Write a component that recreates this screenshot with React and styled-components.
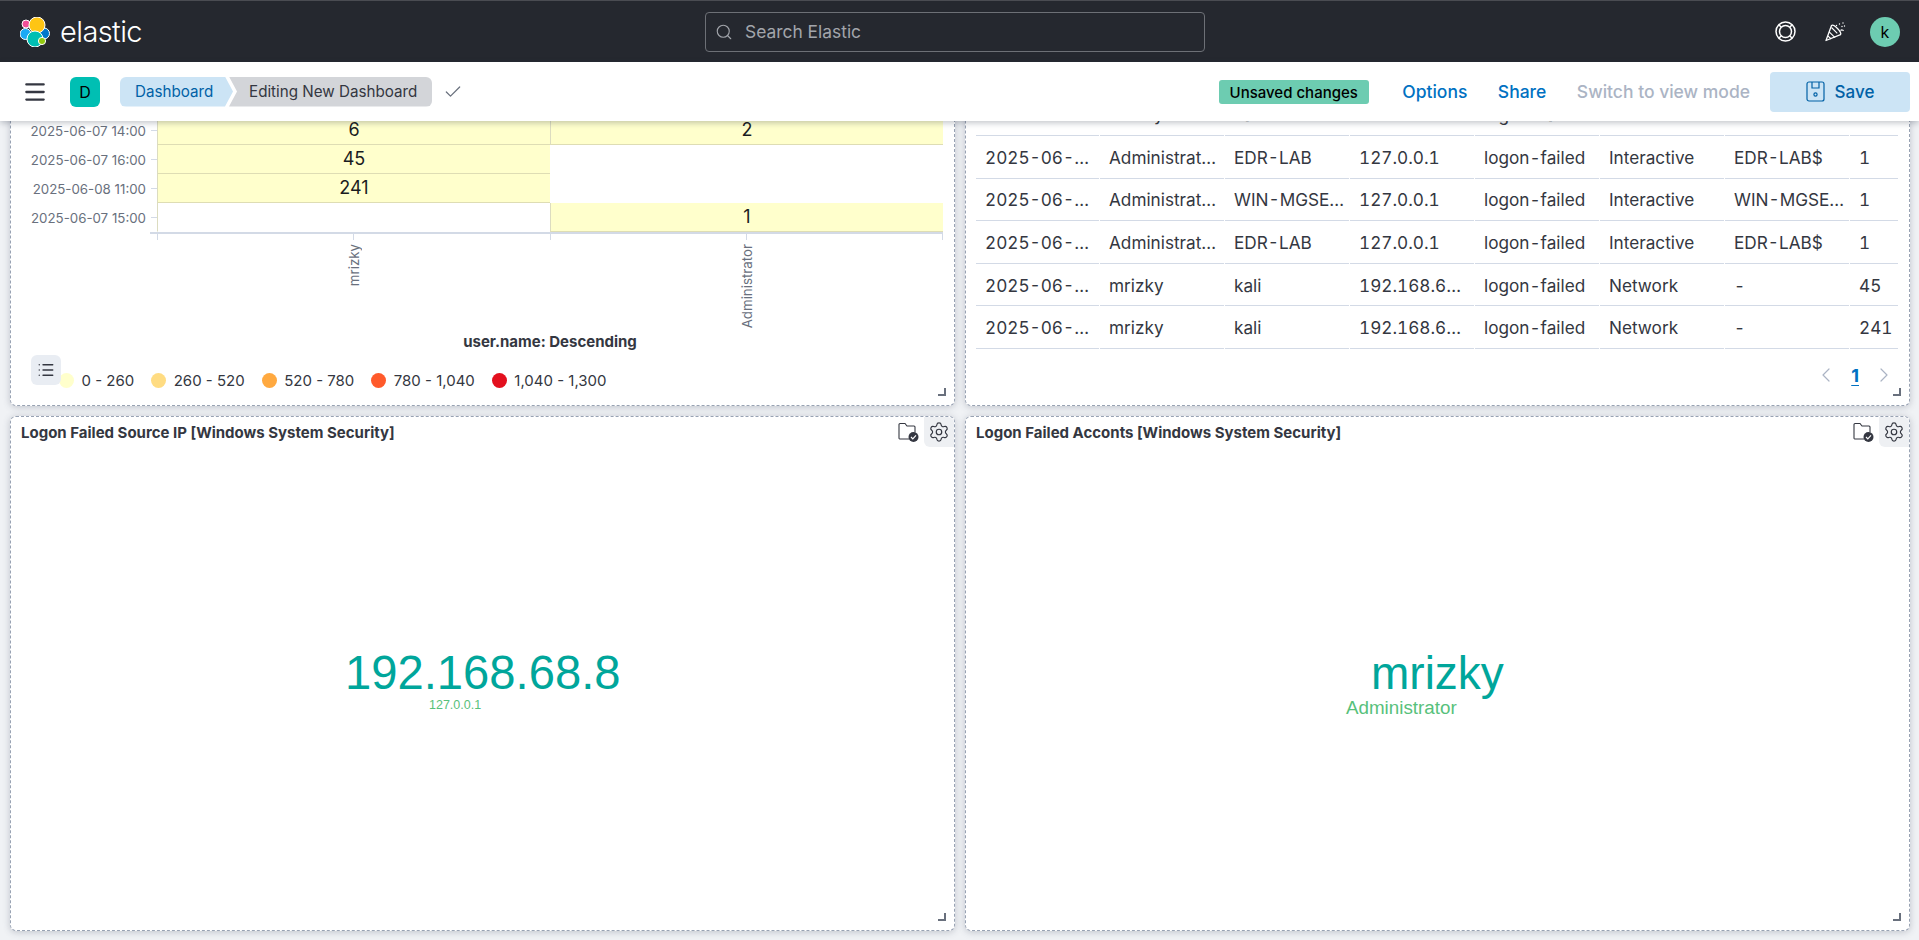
import React from 'react';
import styled, { createGlobalStyle } from 'styled-components';
import { Search, Menu, Check, Settings, List, ChevronLeft, ChevronRight } from 'lucide-react';

const GlobalStyle = createGlobalStyle`
  html, body { margin: 0; height: 100%; overflow: hidden; background: #f0f2f5; }
  body { font-family: Inter, "Liberation Sans", sans-serif; color: #343741; }
`;

const Page = styled.div`
  display: flex;
  flex-direction: column;
  height: 100vh;
`;

const TopBar = styled.header`
  display: grid;
  grid-template-columns: 705px 500px 1fr;
  align-items: center;
  height: 62px;
  box-sizing: border-box;
  flex-shrink: 0;
  background: #25282f;
  border-top: 1px solid #4a4c52;
`;

const Brand = styled.div`
  display: flex;
  align-items: center;
  gap: 10px;
  padding-left: 20px;
  color: #fff;
  font-size: 29px;
  font-weight: 300;
  letter-spacing: -0.6px;
`;

const SearchBox = styled.div`
  display: flex;
  align-items: center;
  gap: 12px;
  height: 40px;
  box-sizing: border-box;
  padding-left: 9px;
  border: 1px solid #6d7076;
  border-radius: 4px;
  color: #a2a5ab;
  font-size: 17.4px;
`;

const TopIcons = styled.div`
  display: flex;
  justify-content: flex-end;
  align-items: center;
  gap: 20px;
  padding-right: 19px;
  color: #fff;
`;

const IconSlot = styled.div`
  display: flex;
  justify-content: center;
  width: 30px;
`;

const Avatar = styled.div`
  display: flex;
  align-items: center;
  justify-content: center;
  width: 30px;
  height: 30px;
  border-radius: 50%;
  background: #6dccb1;
  color: #000;
  font-size: 16px;
`;

const SubBar = styled.div`
  position: relative;
  z-index: 2;
  display: flex;
  align-items: center;
  height: 59px;
  flex-shrink: 0;
  padding: 0 9px 0 22px;
  background: #fff;
  box-shadow: 0 2px 6px rgba(40, 50, 70, 0.28);
`;

const Burger = styled.div`
  display: flex;
  color: #343741;
  margin-right: 22px;
`;

const SpaceBadge = styled.div`
  display: flex;
  align-items: center;
  justify-content: center;
  width: 30px;
  height: 30px;
  margin-right: 20px;
  border-radius: 6px;
  background: #00bfb3;
  color: #000;
  font-size: 16px;
`;

const Crumbs = styled.div`
  display: flex;
  height: 30px;
  border-radius: 6px;
  overflow: hidden;
  font-size: 15.2px;
`;

const CrumbLink = styled.div`
  display: flex;
  align-items: center;
  width: 113px;
  box-sizing: border-box;
  padding-left: 15px;
  background: #cce4f5;
  color: #0061a6;
  clip-path: polygon(0 0, calc(100% - 8px) 0, 100% 50%, calc(100% - 8px) 100%, 0 100%);
`;

const CrumbCurrent = styled.div`
  display: flex;
  align-items: center;
  margin-left: -4px;
  padding: 0 15px 0 20px;
  background: #d3d5d9;
  color: #343741;
  clip-path: polygon(0 0, 100% 0, 100% 100%, 0 100%, 8px 50%);
`;

const CrumbCheck = styled.div`
  display: flex;
  margin-left: 11px;
  color: #69707d;
`;

const Actions = styled.div`
  display: flex;
  align-items: center;
  gap: 30.5px;
  margin-left: auto;
`;

const UnsavedBadge = styled.div`
  display: flex;
  align-items: center;
  justify-content: center;
  width: 150px;
  height: 24px;
  margin-right: 3px;
  padding-top: 1px;
  box-sizing: border-box;
  border-radius: 3px;
  background: #6dccb1;
  color: #000;
  font-size: 15px;
  font-weight: 500;
`;

const ActionLink = styled.a`
  font-size: 17.5px;
  font-weight: 500;
  color: ${p => (p.$disabled ? '#abb4c4' : '#0071c2')};
`;

const SaveButton = styled.button`
  display: flex;
  align-items: center;
  justify-content: center;
  gap: 10px;
  width: 140px;
  height: 40px;
  margin-left: -10.5px;
  border: 0;
  border-radius: 4px;
  background: #cce4f5;
  color: #0061a6;
  font: 500 17px Inter, sans-serif;
`;

const Main = styled.main`
  flex: 1;
  overflow: hidden;
`;

const PanelGrid = styled.div`
  display: grid;
  grid-template-columns: 945px 945px;
  grid-template-rows: 305px 515px;
  column-gap: 10px;
  row-gap: 10px;
  margin: -20px 0 0 10px;
`;

const Panel = styled.section`
  position: relative;
  display: flex;
  flex-direction: column;
  justify-content: ${p => (p.$clipped ? 'flex-end' : 'flex-start')};
  overflow: hidden;
  box-sizing: border-box;
  background: #fff;
  border: 1px dashed #98a2b3;
  border-radius: 6px;
  box-shadow: 0 1px 7px rgba(60, 70, 90, 0.28);
`;

const ResizeHandle = styled.div`
  position: absolute;
  right: 8px;
  bottom: 9px;
  width: 6px;
  height: 6px;
  border-right: 2px solid #69707d;
  border-bottom: 2px solid #69707d;
`;

/* heat map */
const HeatRow = styled.div`
  display: grid;
  grid-template-columns: 135px 11px 393px 393px;
  align-items: center;
  height: 29px;
  flex-shrink: 0;
`;

const RowLabel = styled.div`
  text-align: right;
  font-size: 13.3px;
  color: #69707d;
`;

const RowTick = styled.div`
  justify-self: end;
  width: 6px;
  height: 1px;
  background: #d3dae6;
`;

const HeatCell = styled.div`
  display: flex;
  align-items: center;
  justify-content: center;
  height: 100%;
  box-sizing: border-box;
  padding-bottom: 2px;
  font-size: 18px;
  color: #1a1c21;
  background: ${p => (p.$filled ? '#ffffcc' : '#fff')};
  border-bottom: 1px solid ${p => (p.$filled ? '#deddb4' : 'transparent')};
  border-left: 1px solid ${p => (p.$filled || p.$edge ? '#dcdcc0' : 'transparent')};
`;

const AxisLine = styled.div`
  height: 2px;
  width: 793px;
  margin-left: 139px;
  background: #d3dae6;
  flex-shrink: 0;
`;

const XAxis = styled.div`
  display: flex;
  height: 99px;
  margin-left: 146px;
  flex-shrink: 0;
`;

const XColumn = styled.div`
  position: relative;
  display: flex;
  flex-direction: column;
  align-items: center;
  width: 393px;
  &::before {
    content: '';
    position: absolute;
    left: 0;
    top: 0;
    width: 1px;
    height: 6px;
    background: #d3dae6;
  }
  &:last-child::after {
    content: '';
    position: absolute;
    right: 0;
    top: 0;
    width: 1px;
    height: 6px;
    background: #d3dae6;
  }
`;

const XTick = styled.div`
  width: 1px;
  height: 6px;
  background: #d3dae6;
`;

const XLabel = styled.div`
  margin-top: 4px;
  writing-mode: vertical-rl;
  transform: rotate(180deg);
  font-size: 13.3px;
  color: #69707d;
`;

const AxisTitle = styled.div`
  width: 786px;
  height: 18px;
  margin-left: 146px;
  flex-shrink: 0;
  text-align: center;
  font-size: 15px;
  font-weight: 700;
  line-height: 18px;
`;

const Legend = styled.div`
  display: flex;
  gap: 17px;
  height: 20px;
  margin: 19px 0 15px 48px;
  flex-shrink: 0;
`;

const LegendItem = styled.div`
  display: flex;
  align-items: center;
  gap: 7.5px;
  font-size: 15px;
`;

const LegendDot = styled.span`
  width: 15px;
  height: 15px;
  border-radius: 50%;
  background: ${p => p.$color};
`;

const LegendToggle = styled.div`
  position: absolute;
  left: 20px;
  bottom: 20px;
  display: flex;
  align-items: center;
  justify-content: center;
  width: 30px;
  height: 30px;
  border-radius: 6px;
  background: #e9edf3;
  color: #343741;
`;

/* table */
const TableRow = styled.div`
  display: grid;
  grid-template-columns: 124px repeat(6, 125px) 49px;
  height: 42.6px;
  margin: 0 10px;
  flex-shrink: 0;
`;

const TableCell = styled.div`
  display: flex;
  align-items: center;
  padding: 1px 0 0 9px;
  margin-right: 1px;
  border-bottom: 1px solid #d3dae6;
  font-size: 17.2px;
  font-variant-numeric: tabular-nums;
  white-space: nowrap;
  color: #343741;
`;

const Pagination = styled.div`
  display: flex;
  align-items: center;
  justify-content: flex-end;
  gap: 13px;
  height: 56px;
  padding: 0 13px 4px 0;
  box-sizing: border-box;
  flex-shrink: 0;
  color: #abb4c4;
`;

const PageNumber = styled.a`
  color: #0071c2;
  font-size: 18px;
  font-weight: 700;
  text-decoration: underline;
  text-underline-offset: 3px;
`;

/* word cloud panels */
const PanelHeader = styled.div`
  display: flex;
  align-items: flex-start;
  justify-content: space-between;
  padding-left: 10px;
`;

const PanelTitle = styled.h3`
  margin: 7px 0 0;
  font-size: 15px;
  font-weight: 700;
  line-height: 17px;
  color: #343741;
`;

const PanelTools = styled.div`
  display: flex;
  align-items: center;
  gap: 5px;
  color: #343741;
`;

const GearButton = styled.div`
  display: flex;
  align-items: center;
  justify-content: center;
  width: 30px;
  height: 30px;
  border-radius: 0 6px 0 6px;
  background: #eef0f3;
`;

const Word = styled.span`
  position: absolute;
  left: ${p => p.$x}px;
  top: ${p => p.$y}px;
  font-family: "Liberation Sans", Arial, sans-serif;
  font-size: ${p => p.$size}px;
  line-height: 1;
  color: ${p => p.$color};
`;

const ElasticLogo = () => (
  <svg width="30" height="30" viewBox="0 0 30 30">
    <circle cx="6" cy="7" r="4" fill="#f04e98" stroke="#fff" strokeWidth="1" />
    <circle cx="5.5" cy="17" r="5.5" fill="#1ba9f5" stroke="#fff" strokeWidth="1" />
    <circle cx="24" cy="16.5" r="5.5" fill="#0077cc" stroke="#fff" strokeWidth="1" />
    <circle cx="17" cy="8" r="8" fill="#fec514" stroke="#fff" strokeWidth="1" />
    <circle cx="15" cy="22" r="8" fill="#00bfb3" stroke="#fff" strokeWidth="1" />
    <circle cx="22" cy="24" r="3.6" fill="#93c90e" stroke="#fff" strokeWidth="1" />
  </svg>
);

const LifeRing = () => (
  <svg width="21" height="21" viewBox="0 0 21 21" fill="none" stroke="currentColor" strokeWidth="1.5">
    <circle cx="10.5" cy="10.5" r="9.5" />
    <circle cx="10.5" cy="10.5" r="6" />
    <path d="M3.8 3.8l2.5 2.5M17.2 3.8l-2.5 2.5M3.8 17.2l2.5-2.5M17.2 17.2l-2.5-2.5" />
  </svg>
);

const PartyHat = () => (
  <svg width="21" height="20" viewBox="0 0 21 20" fill="none" stroke="currentColor" strokeWidth="1.3" strokeLinejoin="round">
    <path d="M1 18.5L6.5 3.5c1 -.8 3.5 .6 6 3s4 5.2 3 6.2z" />
    <path d="M4.2 9.8l5.8 5.8M2.8 13.8l3.4 3.2M6.5 5.5l5.8 5.8" strokeWidth="1.1" />
    <path d="M15.5 8.5c1.2-.9 2.4-.6 3 .3" strokeWidth="1.2" />
    <path d="M11.5 3.5v.01M14.5 2v.01M18 1v.01M17 4.5v.01M19.5 4v.01" strokeWidth="1.4" strokeLinecap="round" />
  </svg>
);

const SaveIcon = () => (
  <svg width="19" height="21" viewBox="0 0 19 21" fill="none" stroke="currentColor" strokeWidth="1.2">
    <rect x="1" y="1" width="17" height="19" rx="2" />
    <path d="M6 1v6h7V1" />
    <circle cx="9.5" cy="13.5" r="1.6" />
  </svg>
);

const FolderCheck = () => (
  <svg width="21" height="20" viewBox="0 0 21 20" fill="none">
    <path d="M1 16.5V2.5a1 1 0 0 1 1-1h5l2 2.5h7a1 1 0 0 1 1 1V10M11 17H2a1 1 0 0 1-1-.5" stroke="#343741" strokeWidth="1.1" />
    <circle cx="15.5" cy="15" r="5" fill="#343741" />
    <path d="M13 15l1.8 1.8 3.2-3.4" stroke="#fff" strokeWidth="1.2" />
  </svg>
);

const heatRows = [
  ['2025-06-07 14:00', 6, 2],
  ['2025-06-07 16:00', 45, null],
  ['2025-06-08 11:00', 241, null],
  ['2025-06-07 15:00', null, 1],
];

const legend = [
  ['#ffffcc', '0 - 260'],
  ['#ffdc82', '260 - 520'],
  ['#ffa940', '520 - 780'],
  ['#ff5a2b', '780 - 1,040'],
  ['#e3101e', '1,040 - 1,300'],
];

const tableRows = [
  ['2025-06-…', 'mrizky', 'kali', '192.168.6…', 'logon-failed', 'Network', '-', '6'],
  ['2025-06-…', 'Administrat…', 'EDR-LAB', '127.0.0.1', 'logon-failed', 'Interactive', 'EDR-LAB$', '1'],
  ['2025-06-…', 'Administrat…', 'WIN-MGSE…', '127.0.0.1', 'logon-failed', 'Interactive', 'WIN-MGSE…', '1'],
  ['2025-06-…', 'Administrat…', 'EDR-LAB', '127.0.0.1', 'logon-failed', 'Interactive', 'EDR-LAB$', '1'],
  ['2025-06-…', 'mrizky', 'kali', '192.168.6…', 'logon-failed', 'Network', '-', '45'],
  ['2025-06-…', 'mrizky', 'kali', '192.168.6…', 'logon-failed', 'Network', '-', '241'],
];

const CloudPanel = ({ title, words }) => (
  <Panel>
    <PanelHeader>
      <PanelTitle>{title}</PanelTitle>
      <PanelTools>
        <FolderCheck />
        <GearButton><Settings size={22} strokeWidth={1.3} /></GearButton>
      </PanelTools>
    </PanelHeader>
    {words.map(w => (
      <Word key={w.text} $x={w.x} $y={w.y} $size={w.size} $color={w.color}>{w.text}</Word>
    ))}
    <ResizeHandle />
  </Panel>
);

export default function App() {
  return (
    <Page>
      <GlobalStyle />
      <TopBar>
        <Brand><ElasticLogo />elastic</Brand>
        <SearchBox><Search size={18} strokeWidth={1.5} />Search Elastic</SearchBox>
        <TopIcons>
          <IconSlot><LifeRing /></IconSlot>
          <IconSlot><PartyHat /></IconSlot>
          <Avatar>k</Avatar>
        </TopIcons>
      </TopBar>

      <SubBar>
        <Burger><Menu size={26} strokeWidth={2.1} /></Burger>
        <SpaceBadge>D</SpaceBadge>
        <Crumbs>
          <CrumbLink>Dashboard</CrumbLink>
          <CrumbCurrent>Editing New Dashboard</CrumbCurrent>
        </Crumbs>
        <CrumbCheck><Check size={20} strokeWidth={1.5} /></CrumbCheck>
        <Actions>
          <UnsavedBadge>Unsaved changes</UnsavedBadge>
          <ActionLink>Options</ActionLink>
          <ActionLink>Share</ActionLink>
          <ActionLink $disabled>Switch to view mode</ActionLink>
          <SaveButton><SaveIcon />Save</SaveButton>
        </Actions>
      </SubBar>

      <Main>
        <PanelGrid>
          <Panel $clipped>
            {heatRows.map(([label, a, b]) => (
              <HeatRow key={label}>
                <RowLabel>{label}</RowLabel>
                <RowTick />
                <HeatCell $edge $filled={a !== null}>{a}</HeatCell>
                <HeatCell $filled={b !== null}>{b}</HeatCell>
              </HeatRow>
            ))}
            <AxisLine />
            <XAxis>
              <XColumn><XTick /><XLabel>mrizky</XLabel></XColumn>
              <XColumn><XTick /><XLabel>Administrator</XLabel></XColumn>
            </XAxis>
            <AxisTitle>user.name: Descending</AxisTitle>
            <Legend>
              {legend.map(([color, text]) => (
                <LegendItem key={text}><LegendDot $color={color} />{text}</LegendItem>
              ))}
            </Legend>
            <LegendToggle><List size={18} strokeWidth={1.8} /></LegendToggle>
            <ResizeHandle />
          </Panel>

          <Panel $clipped>
            {tableRows.map((row, i) => (
              <TableRow key={i}>
                {row.map((cell, j) => <TableCell key={j}>{cell}</TableCell>)}
              </TableRow>
            ))}
            <Pagination>
              <ChevronLeft size={24} strokeWidth={1.2} />
              <PageNumber>1</PageNumber>
              <ChevronRight size={24} strokeWidth={1.2} />
            </Pagination>
            <ResizeHandle />
          </Panel>

          <CloudPanel
            title="Logon Failed Source IP [Windows System Security]"
            words={[
              { text: '192.168.68.8', x: 334, y: 232, size: 47.2, color: '#00a69b' },
              { text: '127.0.0.1', x: 418, y: 282, size: 12.5, color: '#57c17b' },
            ]}
          />
          <CloudPanel
            title="Logon Failed Acconts [Windows System Security]"
            words={[
              { text: 'mrizky', x: 405, y: 233, size: 46, color: '#00a69b' },
              { text: 'Administrator', x: 380, y: 282, size: 18.8, color: '#57c17b' },
            ]}
          />
        </PanelGrid>
      </Main>
    </Page>
  );
}
